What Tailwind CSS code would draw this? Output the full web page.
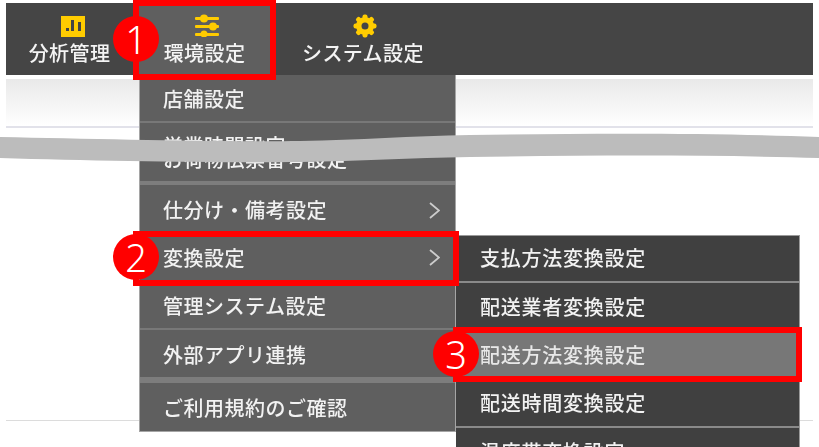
<!DOCTYPE html>
<html lang="ja">
<head>
    <meta charset="UTF-8">
    <script src="https://cdn.jsdelivr.net/npm/@tailwindcss/browser@4"></script>
    <title>環境設定</title>
</head>
<body class="bg-white overflow-hidden font-['Noto_Sans_CJK_JP','Noto_Sans',sans-serif]">
<div class="relative w-[819px] h-[447px] overflow-hidden pt-[3px] px-[6px]">
    <!-- ヘッダー -->
    <nav class="flex h-[72px] bg-[#454545] text-[#f4f4f4] text-[20px] leading-[24px] tracking-[0.4px] font-medium">
        <div class="w-[127px] flex flex-col items-center pt-[13px] gap-[4px]">
            <svg class="w-[24px] h-[21px] ml-[6px] blur-[0.4px]" viewBox="0 0 24 21">
                <rect width="24" height="21" fill="#fc0"/>
                <rect x="5" y="12" width="3" height="3" fill="#444"/>
                <rect x="10" y="4" width="3" height="11" fill="#444"/>
                <rect x="17" y="6" width="3" height="9" fill="#444"/>
            </svg>
            <span class="blur-[0.3px]">分析管理</span>
        </div>
        <div class="w-[137px] border-l-[6px] border-[#454545] bg-[#5f5f5f] flex flex-col items-center pt-[11px] gap-[4px]">
            <svg class="w-[24px] h-[23px] ml-[5px] blur-[0.4px]" viewBox="0 0 24 23" fill="#fc0">
                <rect x="0" y="3" width="24" height="3" rx="1"/>
                <rect x="0" y="11" width="24" height="3" rx="1"/>
                <rect x="0" y="19" width="24" height="3" rx="1"/>
                <circle cx="9" cy="4.5" r="4"/>
                <circle cx="18" cy="12.5" r="4"/>
                <circle cx="9" cy="20" r="3.5"/>
            </svg>
            <span class="blur-[0.3px]">環境設定</span>
        </div>
        <div class="pl-[32px] flex flex-col items-center pt-[11px] gap-[3px]">
            <svg class="w-[24px] h-[24px] ml-[4px] blur-[0.4px]" viewBox="0 0 24 24">
                <g fill="#fc0">
                    <circle cx="12" cy="12" r="9"/>
                    <rect x="9.5" y="0.5" width="5" height="23" rx="2"/>
                    <rect x="9.5" y="0.5" width="5" height="23" rx="2" transform="rotate(45 12 12)"/>
                    <rect x="9.5" y="0.5" width="5" height="23" rx="2" transform="rotate(90 12 12)"/>
                    <rect x="9.5" y="0.5" width="5" height="23" rx="2" transform="rotate(135 12 12)"/>
                </g>
                <circle cx="12" cy="12" r="3.5" fill="#454545"/>
            </svg>
            <span class="blur-[0.3px]">システム設定</span>
        </div>
    </nav>

    <!-- サブバー -->
    <div class="h-[52px] mt-[1px] border-t-[3px] border-t-white border-b-[2px] border-b-[#e2e2ea] bg-linear-to-b from-[#e9e9e9] to-white"></div>

    <!-- 下の区切り線 -->
    <div class="mt-[292px] h-[1px] bg-[#dcdcdc]"></div>

    <!-- 第1階層メニュー -->
    <ul class="absolute left-[139px] top-[75px] w-[317px] bg-[#5f5f5f] border-x border-b border-[#a5a5a5] text-[#f2f2f2] text-[20px] leading-[24px] tracking-[0.5px] font-medium">
        <li class="h-[48px] pl-[23px] pt-[2px] flex items-center border-b-[2px] border-[#787878]"><span class="blur-[0.3px]">店舗設定</span></li>
        <li class="h-[44px] -mb-[33px] pl-[23px] pt-[2px] flex items-center"><span class="blur-[0.3px]">営業時間設定</span></li>
        <li class="h-[47px] pl-[23px] pt-[2px] flex items-center"><span class="blur-[0.3px]">お荷物伝票番号設定</span></li>
        <li class="h-[52px] pl-[23px] pr-[15px] pt-[2px] flex items-center justify-between border-t-[4px] border-[#7d7d7d]">
            <span class="blur-[0.3px]">仕分け・備考設定</span>
            <svg class="w-[11px] h-[17px]" viewBox="0 0 11 17" fill="none" stroke="#ccc" stroke-width="1.8"><path d="M1 1 L10 8.5 L1 16"/></svg>
        </li>
        <li class="h-[49px] pl-[23px] pr-[15px] pt-[2px] flex items-center justify-between border-b-[2px] border-[#787878]">
            <span class="blur-[0.3px]">変換設定</span>
            <svg class="w-[11px] h-[17px]" viewBox="0 0 11 17" fill="none" stroke="#ccc" stroke-width="1.8"><path d="M1 1 L10 8.5 L1 16"/></svg>
        </li>
        <li class="h-[48px] pl-[23px] pt-[2px] flex items-center border-b-[2px] border-[#787878]"><span class="blur-[0.3px]">管理システム設定</span></li>
        <li class="h-[47px] pl-[23px] pt-[2px] flex items-center"><span class="blur-[0.3px]">外部アプリ連携</span></li>
        <li class="h-[54px] pl-[23px] pt-[2px] flex items-center border-t-[6px] border-[#7d7d7d]"><span class="blur-[0.3px]">ご利用規約のご確認</span></li>
    </ul>

    <!-- 第2階層メニュー -->
    <ul class="absolute left-[456px] top-[235px] w-[344px] bg-[#404040] border-t border-r border-[#9a9a9a] text-[#f2f2f2] text-[20px] leading-[24px] tracking-[0.75px] font-medium">
        <li class="h-[47px] pl-[24px] pb-[2px] flex items-center border-b-[2px] border-[#8a8a8a]"><span class="blur-[0.3px]">支払方法変換設定</span></li>
        <li class="h-[49px] pl-[24px] pb-[2px] flex items-center"><span class="blur-[0.3px]">配送業者変換設定</span></li>
        <li class="h-[48px] pl-[24px] pb-[2px] flex items-center bg-[#777777] text-[#e8e8e8]"><span class="blur-[0.3px]">配送方法変換設定</span></li>
        <li class="h-[48px] pl-[24px] flex items-center border-b-[2px] border-[#8a8a8a]"><span class="blur-[0.3px]">配送時間変換設定</span></li>
        <li class="h-[47px] pl-[24px] flex items-center"><span class="blur-[0.3px]">温度帯変換設定</span></li>
    </ul>

    <!-- 省略を示す帯 -->
    <svg class="absolute left-0 top-0 w-[819px] h-[447px] pointer-events-none" viewBox="0 0 819 447">
        <path d="M0 137 C100 139 220 142 300 141 C360 140 410 136 470 135 C600 133 720 133 819 137 L819 158 C720 155 600 155 470 157 C410 158 360 161 300 162 C220 163 100 161 0 158 Z" fill="#bcbcbc"/>
    </svg>

    <!-- 赤枠 -->
    <div class="absolute left-[133px] top-0 w-[143px] h-[80px] border-[6px] border-[#ff0000]"></div>
    <div class="absolute left-[133px] top-[231px] w-[326px] h-[55px] border-[6px] border-[#ff0000]"></div>
    <div class="absolute left-[453px] top-[327px] w-[349px] h-[55px] border-[6px] border-[#ff0000]"></div>

    <!-- 番号バッジ -->
    <div class="absolute left-[113px] top-[16px] w-[46px] h-[46px] rounded-full bg-[#ff0000] text-white text-[38px] leading-[46px] text-center font-light font-['Noto_Sans']">1</div>
    <div class="absolute left-[113px] top-[234px] w-[46px] h-[46px] rounded-full bg-[#ff0000] text-white text-[38px] leading-[46px] text-center font-light font-['Noto_Sans']">2</div>
    <div class="absolute left-[433px] top-[331px] w-[46px] h-[46px] rounded-full bg-[#ff0000] text-white text-[38px] leading-[46px] text-center font-light font-['Noto_Sans']">3</div>
</div>
</body>
</html>
